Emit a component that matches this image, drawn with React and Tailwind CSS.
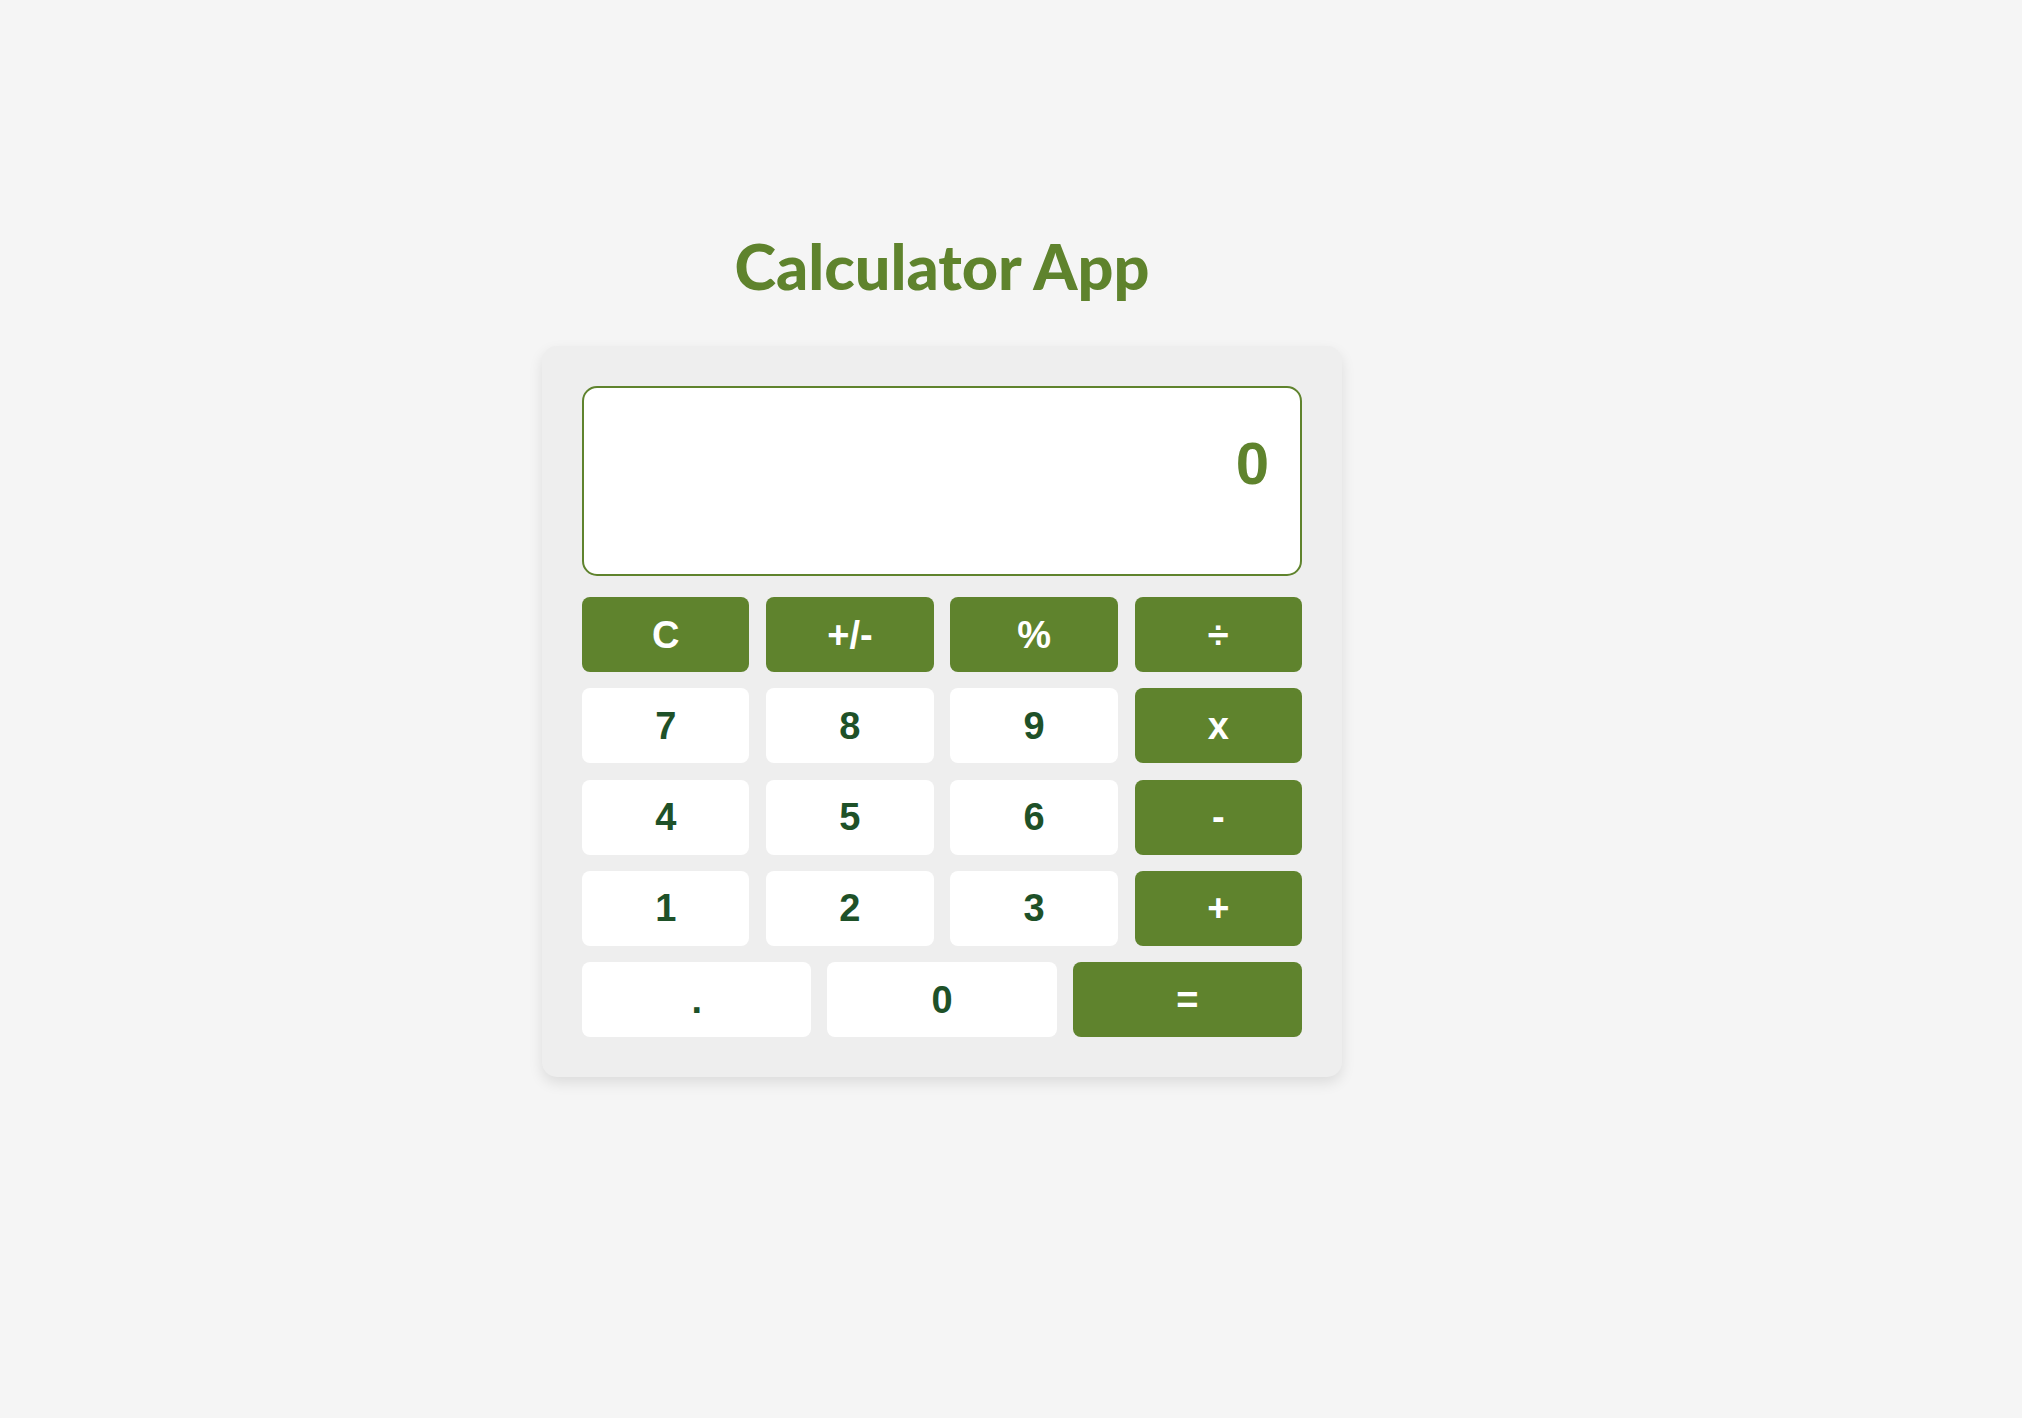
import { useState } from "react";

const GREEN = "bg-[#5f832d] text-white";
const WHITE = "bg-white text-[#1e5128]";

const rows = [
  [
    { label: "C", kind: "op" },
    { label: "+/-", kind: "op" },
    { label: "%", kind: "op" },
    { label: "÷", kind: "op" },
  ],
  [
    { label: "7" },
    { label: "8" },
    { label: "9" },
    { label: "x", kind: "op" },
  ],
  [
    { label: "4" },
    { label: "5" },
    { label: "6" },
    { label: "-", kind: "op" },
  ],
  [
    { label: "1" },
    { label: "2" },
    { label: "3" },
    { label: "+", kind: "op" },
  ],
];

function Key({ label, kind, onPress }) {
  return (
    <button
      type="button"
      onClick={() => onPress(label)}
      className={`h-[75px] rounded-[8px] text-[38px] font-bold leading-none ${
        kind === "op" ? GREEN : WHITE
      }`}
    >
      {label}
    </button>
  );
}

export default function App() {
  const [display, setDisplay] = useState("0");

  // just enough logic to make the keys do something
  const press = (k) => {
    if (k === "C") return setDisplay("0");
    if (k === "+/-") return setDisplay((d) => (d.startsWith("-") ? d.slice(1) : d === "0" ? d : "-" + d));
    if (k === "=") {
      try {
        const expr = display.replace(/x/g, "*").replace(/÷/g, "/").replace(/%/g, "/100");
        // eslint-disable-next-line no-new-func
        const v = Function(`return (${expr})`)();
        return setDisplay(String(v));
      } catch {
        return setDisplay("Error");
      }
    }
    setDisplay((d) => (d === "0" && k !== "." ? k : d + k));
  };

  return (
    <div className="min-h-screen bg-[#f5f5f5] pt-[228px] pr-[138px] font-['Liberation_Sans',Arial,sans-serif]">
      <div className="flex flex-col items-center">
        <h1 className="mb-[42px] font-['Lato','Noto_Sans',sans-serif] text-[63px] font-black leading-[76px] text-[#5f832d]">
          Calculator App
        </h1>

        <div className="w-[800px] rounded-[15px] bg-[#eeeeee] p-[40px] shadow-[0_6px_14px_rgba(0,0,0,0.1)]">
          <div className="mb-[21px] h-[190px] rounded-[15px] border-2 border-[#5f832d] bg-white pt-[41px] pr-[31px] text-right text-[60px] font-bold leading-[69px] text-[#5f832d]">
            {display}
          </div>

          <div className="flex flex-col gap-[16.3px]">
            {rows.map((row, i) => (
              <div key={i} className="grid grid-cols-4 gap-[16.7px]">
                {row.map((k) => (
                  <Key key={k.label} {...k} onPress={press} />
                ))}
              </div>
            ))}
            <div className="grid grid-cols-3 gap-[16px]">
              <Key label="." onPress={press} />
              <Key label="0" onPress={press} />
              <Key label="=" kind="op" onPress={press} />
            </div>
          </div>
        </div>
      </div>
    </div>
  );
}
